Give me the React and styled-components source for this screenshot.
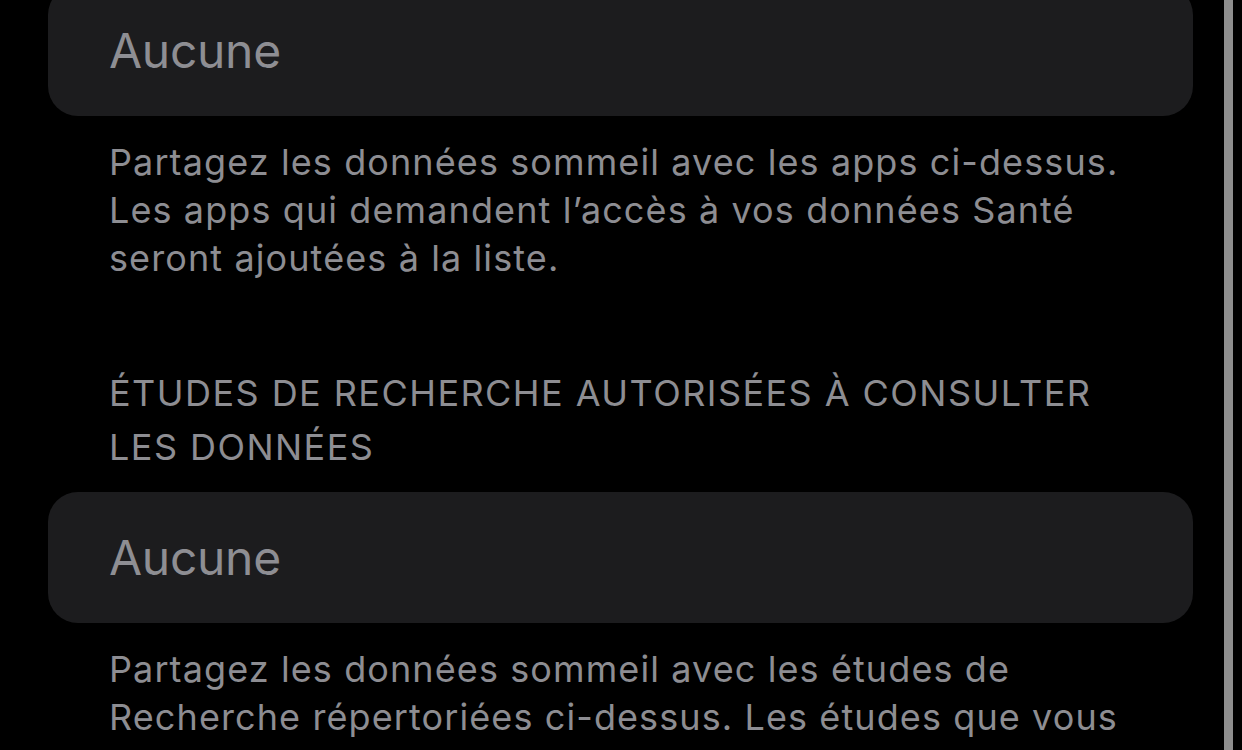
import React from 'react';
import styled, { createGlobalStyle } from 'styled-components';

const GlobalStyle = createGlobalStyle`
    html, body {
        margin: 0;
        padding: 0;
        background: #000;
        overflow: hidden;
    }
`;

const Screen = styled.div`
    position: relative;
    height: 750px;
    overflow: hidden;
    background: #000;
    font-family: Inter, "Liberation Sans", sans-serif;
    color: #8e8e93;
`;

const Content = styled.div`
    display: flex;
    flex-direction: column;
    margin-top: -15px;
    padding: 0 49px 0 48px;
`;

const Card = styled.div`
    display: flex;
    align-items: center;
    height: 131px;
    padding-left: 61px;
    background: #1c1c1e;
    border-radius: 30px;
    font-size: 48px;
    letter-spacing: -0.3px;
    color: #8e8e93;
`;

// texte gris sous chaque carte
const FooterText = styled.p`
    margin: 22px 0 0;
    padding: 0 61px;
    font-size: 36px;
    line-height: 48px;
    letter-spacing: 1.1px;
    color: #8d8d92;
`;

const SectionHeader = styled.h2`
    margin: 84px 0 18px;
    padding: 0 61px;
    font-size: 36px;
    font-weight: 400;
    line-height: 54px;
    letter-spacing: 1.45px;
    color: #8d8d92;
`;

// indicateur de défilement à droite
const ScrollIndicator = styled.div`
    position: absolute;
    top: 0;
    bottom: 0;
    right: 9px;
    width: 9px;
    background: #8e8e8e;
`;

const App = () => {
    return (
        <Screen>
            <GlobalStyle />
            <Content>
                <Card>Aucune</Card>
                <FooterText>
                    Partagez les données sommeil avec les apps ci-dessus. Les apps qui demandent l’accès à vos données Santé seront ajoutées à la liste.
                </FooterText>

                <SectionHeader>ÉTUDES DE RECHERCHE AUTORISÉES À CONSULTER LES DONNÉES</SectionHeader>
                <Card>Aucune</Card>
                <FooterText>
                    Partagez les données sommeil avec les études de Recherche répertoriées ci-dessus. Les études que vous autorisez à lire vos données Santé seront ajoutées à la liste.
                </FooterText>
            </Content>
            <ScrollIndicator />
        </Screen>
    );
};

export default App;
